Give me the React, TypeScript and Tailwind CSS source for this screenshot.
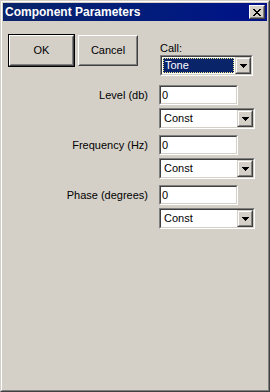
const font = { fontFamily: '"Liberation Sans", Arial, sans-serif' };

const Arrow = () => (
  <svg width="7" height="4" viewBox="0 0 7 4" shapeRendering="crispEdges">
    <path d="M0 0h7v1H0zM1 1h5v1H1zM2 2h3v1H2zM3 3h1v1H3z" fill="#000" />
  </svg>
);

const Sunken = ({ className, children }: { className: string; children?: React.ReactNode }) => (
  <div className={`border border-t-[#808080] border-l-[#808080] border-r-white border-b-white ${className}`}>
    <div className="h-full w-full border border-t-[#404040] border-l-[#404040] border-r-[#d4d0c8] border-b-[#d4d0c8] bg-white">
      {children}
    </div>
  </div>
);

const DropButton = () => (
  <div className="h-full w-[16px] border border-t-[#d4d0c8] border-l-[#d4d0c8] border-r-[#404040] border-b-[#404040] bg-[#d4d0c8]">
    <div className="flex h-full w-full items-center justify-center border border-t-white border-l-white border-r-[#808080] border-b-[#808080]">
      <Arrow />
    </div>
  </div>
);

const Combo = ({ value, focused, width }: { value: string; focused?: boolean; width: string }) => (
  <Sunken className={`h-[21px] ${width}`}>
    <div className="flex h-full items-stretch">
      <div className="flex flex-1 p-[1px]">
        {focused ? (
          <div className="flex flex-1 items-center border border-dotted border-[#f0e68c] bg-[#0a246a] pl-[1px] text-[11px] text-white">
            {value}
          </div>
        ) : (
          <div className="flex flex-1 items-center pl-[2px] text-[11px] text-black">{value}</div>
        )}
      </div>
      <DropButton />
    </div>
  </Sunken>
);

const Field = ({ value }: { value: string }) => (
  <Sunken className="h-[20px] w-[79px]">
    <div className="flex h-full items-center pl-[1px] text-[11px] text-black">{value}</div>
  </Sunken>
);

const Group = ({ label }: { label: string }) => (
  <div className="flex flex-col gap-[3px]">
    <div className="flex items-center">
      <div className="w-[140px] text-right text-[11px] text-black">{label}</div>
      <div className="ml-[11px]">
        <Field value="0" />
      </div>
    </div>
    <div className="ml-[151px]">
      <Combo value="Const" width="w-[96px]" />
    </div>
  </div>
);

export default function App() {
  return (
    <div style={font} className="h-[392px] w-[270px] border border-t-[#d4d0c8] border-l-[#d4d0c8] border-r-[#404040] border-b-[#404040] bg-[#d4d0c8]">
      <div className="h-full w-full border border-t-white border-l-white border-r-[#808080] border-b-[#808080] p-[1px]">
        <div className="flex h-[18px] items-center justify-between bg-gradient-to-r from-[#0a246a] to-[#00108a] pl-[2px] pr-[2px]">
          <span className="text-[12px] font-bold text-white">Component Parameters</span>
          <div className="h-[14px] w-[16px] border border-t-white border-l-white border-r-[#404040] border-b-[#404040] bg-[#d4d0c8]">
            <div className="flex h-full w-full items-center justify-center border border-t-[#d4d0c8] border-l-[#d4d0c8] border-r-[#808080] border-b-[#808080]">
              <svg width="8" height="7" viewBox="0 0 8 7" shapeRendering="crispEdges">
                <path
                  d="M0 0h2v1H0zM6 0h2v1H6zM1 1h2v1H1zM5 1h2v1H5zM2 2h4v1H2zM3 3h2v1H3zM2 4h4v1H2zM1 5h2v1H1zM5 5h2v1H5zM0 6h2v1H0zM6 6h2v1H6z"
                  fill="#000"
                />
              </svg>
            </div>
          </div>
        </div>

        <div className="ml-[5px] mt-[13px] flex">
          <div className="flex gap-[3px]">
            <div className="h-[33px] w-[67px] border border-black">
              <div className="h-full w-full border border-t-white border-l-white border-r-[#404040] border-b-[#404040]">
                <div className="flex h-full w-full items-center justify-center border border-t-[#d4d0c8] border-l-[#d4d0c8] border-r-[#808080] border-b-[#808080] text-[11px] text-black">
                  OK
                </div>
              </div>
            </div>
            <div className="mt-[1px] h-[31px] w-[60px] border border-t-white border-l-white border-r-[#404040] border-b-[#404040]">
              <div className="flex h-full w-full items-center justify-center border border-t-[#d4d0c8] border-l-[#d4d0c8] border-r-[#808080] border-b-[#808080] text-[11px] text-black">
                Cancel
              </div>
            </div>
          </div>
          <div className="ml-[22px] mt-[7px] flex flex-col">
            <div className="h-[14px] text-[11px] leading-[14px] text-black">Call:</div>
            <Combo value="Tone" focused width="w-[93px]" />
          </div>
        </div>

        <div className="ml-[5px] mt-[9px] flex flex-col gap-[6px]">
          <Group label="Level (db)" />
          <Group label="Frequency (Hz)" />
          <Group label="Phase (degrees)" />
        </div>
      </div>
    </div>
  );
}
